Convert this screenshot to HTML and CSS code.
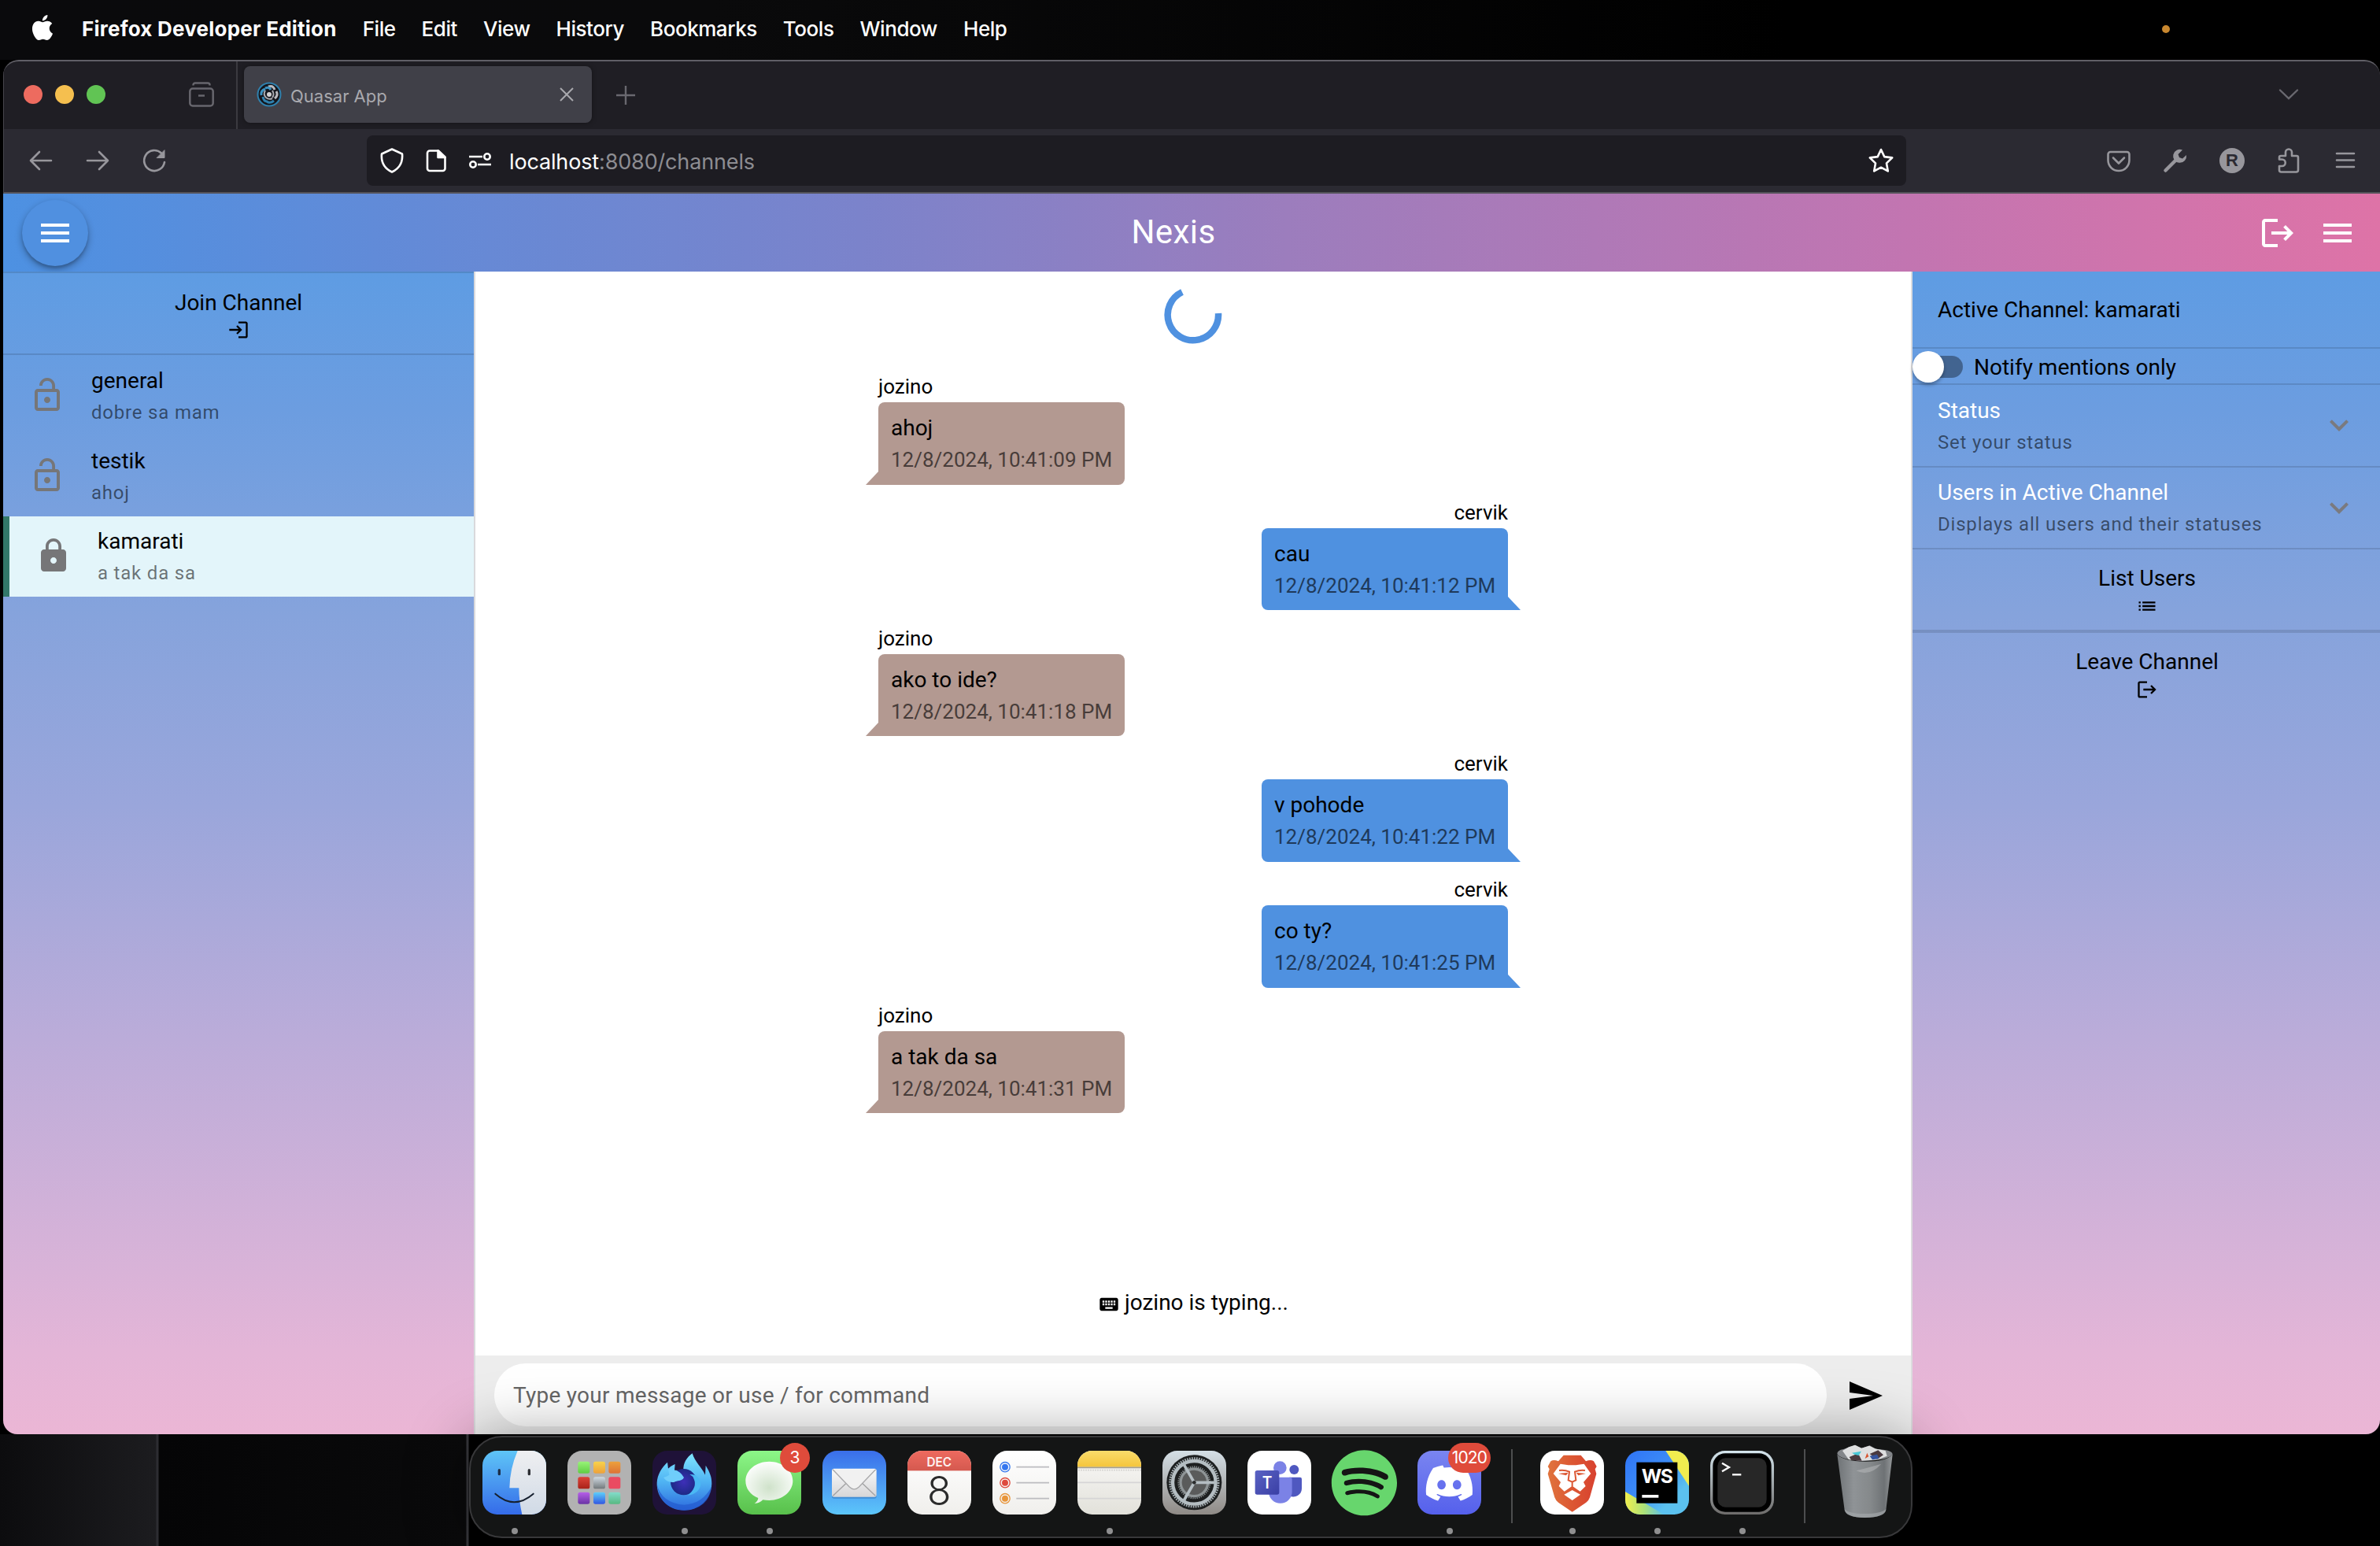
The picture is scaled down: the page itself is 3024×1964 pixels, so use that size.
FILE: index.html
```html
<!DOCTYPE html>
<html lang="en">
<head>
<meta charset="utf-8">
<title>Quasar App</title>
<link rel="stylesheet" href="styles.css">
</head>
<body>
<svg class="defs" width="0" height="0" aria-hidden="true">
  <defs>
    <symbol id="i-menu" viewBox="0 0 24 24"><path d="M3 18h18v-2H3v2zm0-5h18v-2H3v2zm0-7v2h18V6H3z"/></symbol>
    <symbol id="i-logout" viewBox="0 0 24 24"><path d="M17 7l-1.41 1.41L18.17 11H8v2h10.17l-2.58 2.58L17 17l5-5zM4 5h8V3H4c-1.100 0-2 .9-2 2v14c0 1.100.9 2 2 2h8v-2H4V5z"/></symbol>
    <symbol id="i-login" viewBox="0 0 24 24"><path d="M11 7L9.600 8.400l2.600 2.600H2v2h10.200l-2.600 2.600L11 17l5-5-5-5zm9 12h-8v2h8c1.100 0 2-.9 2-2V5c0-1.100-.9-2-2-2h-8v2h8v14z"/></symbol>
    <symbol id="i-lock-open" viewBox="0 0 24 24"><path d="M12 17c1.100 0 2-.9 2-2s-.9-2-2-2-2 .9-2 2 .9 2 2 2zm6-9h-1V6c0-2.760-2.240-5-5-5S7 3.240 7 6h1.900c0-1.710 1.390-3.100 3.100-3.100 1.710 0 3.100 1.390 3.100 3.100v2H6c-1.100 0-2 .9-2 2v10c0 1.100.9 2 2 2h12c1.100 0 2-.9 2-2V10c0-1.100-.9-2-2-2zm0 12H6V10h12v10z"/></symbol>
    <symbol id="i-lock" viewBox="0 0 24 24"><path d="M18 8h-1V6c0-2.760-2.240-5-5-5S7 3.240 7 6v2H6c-1.100 0-2 .9-2 2v10c0 1.100.9 2 2 2h12c1.100 0 2-.9 2-2V10c0-1.100-.9-2-2-2zm-6 9c-1.100 0-2-.9-2-2s.9-2 2-2 2 .9 2 2-.9 2-2 2zm3.100-9H8.900V6c0-1.710 1.390-3.100 3.100-3.100 1.710 0 3.100 1.390 3.100 3.100v2z"/></symbol>
    <symbol id="i-list" viewBox="0 0 24 24"><path d="M3 13h2v-2H3v2zm0 4h2v-2H3v2zm0-8h2V7H3v2zm4 4h14v-2H7v2zm0 4h14v-2H7v2zM7 7v2h14V7H7z"/></symbol>
    <symbol id="i-expand" viewBox="0 0 24 24"><path d="M16.590 8.590L12 13.170 7.410 8.590 6 10l6 6 6-6z"/></symbol>
    <symbol id="i-keyboard" viewBox="0 0 24 24"><path d="M20 5H4c-1.100 0-1.990.9-1.990 2L2 17c0 1.100.9 2 2 2h16c1.100 0 2-.9 2-2V7c0-1.100-.9-2-2-2zm-9 3h2v2h-2V8zm0 3h2v2h-2v-2zM8 8h2v2H8V8zm0 3h2v2H8v-2zm-1 2H5v-2h2v2zm0-3H5V8h2v2zm9 7H8v-2h8v2zm0-4h-2v-2h2v2zm0-3h-2V8h2v2zm3 3h-2v-2h2v2zm0-3h-2V8h2v2z"/></symbol>
    <symbol id="i-send" viewBox="0 0 24 24"><path d="M2.010 21L23 12 2.010 3 2 10l15 2-15 2z"/></symbol>
    <linearGradient id="g-finder" x2="0" y2="1"><stop stop-color="#5ec5f7"/><stop offset="1" stop-color="#356be9"/></linearGradient>
    <linearGradient id="g-face" x2="0" y2="1"><stop stop-color="#efeff1"/><stop offset="1" stop-color="#d0dae6"/></linearGradient>
    <linearGradient id="g-flame" x2="0" y2="1"><stop stop-color="#7fe5ff"/><stop offset=".5" stop-color="#4fb3f3"/><stop offset="1" stop-color="#2c6ade"/></linearGradient>
    <radialGradient id="g-globe"><stop stop-color="#3e2fb8"/><stop offset="1" stop-color="#1d2a86"/></radialGradient>
    <linearGradient id="g-msg" x2="0" y2="1"><stop stop-color="#8cf688"/><stop offset="1" stop-color="#58c04b"/></linearGradient>
    <radialGradient id="g-bubble" cy=".62" r=".6"><stop stop-color="#cfe2ca"/><stop offset="1" stop-color="#fbfdfb"/></radialGradient>
    <linearGradient id="g-mail" x2="0" y2="1"><stop stop-color="#3a6eea"/><stop offset="1" stop-color="#5cc6fa"/></linearGradient>
    <linearGradient id="g-env" x2="0" y2="1"><stop stop-color="#fafafa"/><stop offset="1" stop-color="#d6d6d8"/></linearGradient>
    <linearGradient id="g-paper" x2="0" y2="1"><stop stop-color="#fff"/><stop offset="1" stop-color="#f0efec"/></linearGradient>
    <linearGradient id="g-red" x2="0" y2="1"><stop stop-color="#ee6a5f"/><stop offset="1" stop-color="#d4594f"/></linearGradient>
    <linearGradient id="g-yellow" x2="0" y2="1"><stop stop-color="#fadc6b"/><stop offset="1" stop-color="#f5c53c"/></linearGradient>
    <linearGradient id="g-notes" x2="0" y2="1"><stop stop-color="#faf9f8"/><stop offset="1" stop-color="#e2e1da"/></linearGradient>
    <linearGradient id="g-set" x2="0" y2="1"><stop stop-color="#d5dfe6"/><stop offset="1" stop-color="#8f8a86"/></linearGradient>
    <linearGradient id="g-teams" x2="1" y2="1"><stop stop-color="#5a62c3"/><stop offset="1" stop-color="#3a3fa5"/></linearGradient>
    <linearGradient id="g-discord" x2="0" y2="1"><stop stop-color="#7a85f0"/><stop offset="1" stop-color="#5560ec"/></linearGradient>
    <linearGradient id="g-brave"><stop stop-color="#e0743d"/><stop offset=".5" stop-color="#dc5733"/><stop offset="1" stop-color="#d8412f"/></linearGradient>
    <linearGradient id="g-ws" x2="1" y2="1"><stop stop-color="#2f74f7"/><stop offset=".45" stop-color="#3d8df5"/><stop offset=".75" stop-color="#5bc1ef"/></linearGradient>
    <linearGradient id="g-wsy"><stop stop-color="#f2ef4c"/><stop offset=".5" stop-color="#a9e07b"/><stop offset="1" stop-color="#5bc1ef"/></linearGradient>
    <linearGradient id="g-term" x2="0" y2="1"><stop stop-color="#d3e4ec"/><stop offset="1" stop-color="#6e6c6b"/></linearGradient>
    <linearGradient id="g-trash"><stop stop-color="#6f7376"/><stop offset=".3" stop-color="#8f9396"/><stop offset=".6" stop-color="#85898b"/><stop offset=".85" stop-color="#6e7275"/><stop offset="1" stop-color="#96999b"/></linearGradient>
    <linearGradient id="l-green" x2="0" y2="1"><stop stop-color="#98f378"/><stop offset="1" stop-color="#60ce43"/></linearGradient>
    <linearGradient id="l-yellow" x2="0" y2="1"><stop stop-color="#f8d34c"/><stop offset="1" stop-color="#eea13a"/></linearGradient>
    <linearGradient id="l-orange" x2="0" y2="1"><stop stop-color="#eda13c"/><stop offset="1" stop-color="#dd7335"/></linearGradient>
    <linearGradient id="l-red" x2="0" y2="1"><stop stop-color="#dd4439"/><stop offset="1" stop-color="#a92219"/></linearGradient>
    <linearGradient id="l-gray" x2="0" y2="1"><stop stop-color="#cfd9e1"/><stop offset="1" stop-color="#72787b"/></linearGradient>
    <linearGradient id="l-purple" x2="0" y2="1"><stop stop-color="#b760e8"/><stop offset="1" stop-color="#6a33a5"/></linearGradient>
    <linearGradient id="l-blue" x2="0" y2="1"><stop stop-color="#5fd0fa"/><stop offset="1" stop-color="#3158e2"/></linearGradient>
    <linearGradient id="l-teal" x2="0" y2="1"><stop stop-color="#83dccb"/><stop offset="1" stop-color="#58b982"/></linearGradient>
    <clipPath id="squircle"><rect width="243" height="243" rx="56"/></clipPath>
  </defs>
</svg>

<div class="menubar">
  <svg class="apple" viewBox="0 0 24 24"><path d="M12.152 6.896c-.948 0-2.415-1.078-3.960-1.040-2.040.027-3.910 1.183-4.961 3.014-2.117 3.675-.546 9.103 1.519 12.090 1.013 1.454 2.208 3.090 3.792 3.039 1.520-.065 2.090-.987 3.935-.987 1.831 0 2.350.987 3.960.948 1.637-.026 2.676-1.480 3.676-2.948 1.156-1.688 1.636-3.325 1.662-3.415-.039-.013-3.182-1.221-3.220-4.857-.026-3.040 2.480-4.494 2.597-4.559-1.429-2.090-3.623-2.324-4.390-2.376-2-.156-3.675 1.090-4.610 1.090zM15.530 3.830c.843-1.012 1.400-2.427 1.245-3.830-1.207.052-2.662.805-3.532 1.818-.780.896-1.454 2.338-1.273 3.714 1.338.104 2.715-.688 3.559-1.701"/></svg>
  <span class="app-name">Firefox Developer Edition</span>
  <span>File</span><span>Edit</span><span>View</span><span>History</span><span>Bookmarks</span><span>Tools</span><span>Window</span><span>Help</span>
  <i class="mic-dot"></i>
</div>

<div class="window">
  <div class="tabbar">
    <div class="lights"><i class="red"></i><i class="yellow"></i><i class="green"></i></div>
    <svg class="archive" viewBox="0 0 32 32" fill="none" stroke="#67666d" stroke-width="2.500"><path d="M5.500 4.500V4a2.500 2.500 0 0 1 2.500-2.500h16a2.500 2.500 0 0 1 2.500 2.500v.5"/><rect x="1.300" y="8.500" width="29.400" height="22" rx="3.500"/><path d="M12 17.500h8"/></svg>
    <div class="tab">
      <svg class="favicon" viewBox="0 0 32 32"><circle cx="16" cy="16" r="14.500" fill="#14161c" stroke="#2f80ad" stroke-width="2"/><g fill="none" stroke-width="3"><path d="M15 6q6-2 8 4M25 12q3 5-2 9" stroke="#b9b9bd"/><path d="M22 24q-5 4-9 1M8 19q1 6 6 6" stroke="#2f80ad"/><path d="M6 17q-1-6 5-8M11 8q5-2 7 2" stroke="#3d93c2"/><path d="M11 11q-3 5 1 9M20 11q3 5 0 9M12 20q4 3 8 1" stroke="#a9abb0" stroke-width="2"/></g><circle cx="16" cy="16" r="3" fill="#d0d0d2"/></svg>
      <span class="tab-title">Quasar App</span>
      <svg class="close" viewBox="0 0 18 18" stroke="#a9a9ae" stroke-width="2" fill="none"><path d="M1 1l16 16M17 1L1 17"/></svg>
    </div>
    <svg class="plus" viewBox="0 0 24 24" stroke="#69686f" stroke-width="2.400"><path d="M0 12h24M12 0v24"/></svg>
    <svg class="tabs-menu" viewBox="0 0 26 14" fill="none" stroke="#69686f" stroke-width="2.400" stroke-linecap="round"><path d="M2 1.500l11 10.500 11-10.500"/></svg>
  </div>

  <div class="toolbar">
    <svg class="nav back" viewBox="0 0 32 32" fill="none" stroke="#97969c" stroke-width="2.600" stroke-linecap="round" stroke-linejoin="round"><path d="M29 16H3M14 5L3 16l11 11"/></svg>
    <svg class="nav" viewBox="0 0 32 32" fill="none" stroke="#97969c" stroke-width="2.600" stroke-linecap="round" stroke-linejoin="round"><path d="M3 16h26M18 5l11 11-11 11"/></svg>
    <svg class="nav" viewBox="0 0 32 32" fill="none" stroke="#97969c" stroke-width="2.600" stroke-linecap="round"><path d="M29 18A13 13 0 1 1 25 6.500"/><path d="M29 3v9.500h-9.500z" fill="#97969c" stroke-width="1"/></svg>
    <div class="urlbar">
      <svg viewBox="0 0 32 32" fill="none" stroke="#fff" stroke-width="2.600" stroke-linejoin="round"><path d="M16 1.500l13 6q1.500 16-13 23Q1.500 23.500 3 7.500z"/></svg>
      <svg viewBox="0 0 32 32" fill="none" stroke="#fff" stroke-width="2.600" stroke-linejoin="round"><path d="M8 3.500h11l8.500 8V26a3 3 0 0 1-3 3H8a3 3 0 0 1-3-3V6.500a3 3 0 0 1 3-3z"/><path d="M18.500 3.500v8.500h9z" fill="#fff"/></svg>
      <svg viewBox="0 0 32 32" fill="none" stroke="#fff" stroke-width="2.600"><path d="M2 11h17M13 21h17"/><circle cx="25" cy="11" r="3.700"/><circle cx="7" cy="21" r="3.700"/></svg>
      <span class="url"><b>localhost</b>:8080/channels</span>
      <svg class="star" viewBox="0 0 32 32" fill="none" stroke="#fff" stroke-width="2.600" stroke-linejoin="round"><path d="M16 2l4.300 9.100 9.900 1.300-7.200 7 1.800 10L16 24.700l-8.800 4.700 1.800-10-7.200-7 9.900-1.300z"/></svg>
    </div>
    <div class="tools">
      <svg viewBox="0 0 32 32" fill="none" stroke="#97969c" stroke-width="2.600" stroke-linecap="round" stroke-linejoin="round"><path d="M5.500 5h21a3 3 0 0 1 3 3v7.500a13.500 13.500 0 0 1-27 0V8a3 3 0 0 1 3-3z"/><path d="M9 12.500l7 7 7-7"/></svg>
      <svg viewBox="0 0 32 32"><path d="M3.500 28.500L18 14" stroke="#97969c" stroke-width="4.500" stroke-linecap="round"/><path d="M25 2.500a8.500 8.500 0 1 0 5 6.500l-5 4.500-4-1.500-1.500-4z" fill="#97969c"/></svg>
      <span class="ext">R</span>
      <svg viewBox="0 0 32 32" fill="none" stroke="#97969c" stroke-width="2.600" stroke-linejoin="round"><path d="M4 14.500V12a2 2 0 0 1 2-2h6V5.500a4 4 0 0 1 8 0V10h6a2 2 0 0 1 2 2v16a2.500 2.500 0 0 1-2.500 2.500h-19A2.500 2.500 0 0 1 4 28v-5h3.500a4.200 4.200 0 0 0 0-8.500z"/></svg>
      <svg viewBox="0 0 32 32" stroke="#97969c" stroke-width="2.600" stroke-linecap="round"><path d="M5 7h22M5 15.500h22M5 24h22"/></svg>
    </div>
  </div>

  <div class="app">
    <header class="header">
      <span class="fab"><svg class="i48"><use href="#i-menu"/></svg></span>
      <h1>Nexis</h1>
      <svg class="i48"><use href="#i-logout"/></svg>
      <svg class="i48"><use href="#i-menu"/></svg>
    </header>

    <div class="body">
      <aside class="left">
        <div class="action join"><span>Join Channel</span><svg class="i28"><use href="#i-login"/></svg></div>
        <div class="channel"><svg class="i48"><use href="#i-lock-open"/></svg><div><p>general</p><small>dobre sa mam</small></div></div>
        <div class="channel"><svg class="i48"><use href="#i-lock-open"/></svg><div><p>testik</p><small>ahoj</small></div></div>
        <div class="channel active"><svg class="i48"><use href="#i-lock"/></svg><div><p>kamarati</p><small>a tak da sa</small></div></div>
      </aside>

      <main class="chat">
        <svg class="spinner" viewBox="0 0 76 76" fill="none" stroke="#4f91e0" stroke-width="8.500"><path d="M70 36A32.200 32.200 0 1 1 24 9"/></svg>
        <div class="messages">
          <div class="msg"><span class="name">jozino</span><div class="bubble"><p>ahoj</p><time>12/8/2024, 10:41:09 PM</time></div></div>
          <div class="msg sent"><span class="name">cervik</span><div class="bubble"><p>cau</p><time>12/8/2024, 10:41:12 PM</time></div></div>
          <div class="msg"><span class="name">jozino</span><div class="bubble"><p>ako to ide?</p><time>12/8/2024, 10:41:18 PM</time></div></div>
          <div class="msg sent"><span class="name">cervik</span><div class="bubble"><p>v pohode</p><time>12/8/2024, 10:41:22 PM</time></div></div>
          <div class="msg sent"><span class="name">cervik</span><div class="bubble"><p>co ty?</p><time>12/8/2024, 10:41:25 PM</time></div></div>
          <div class="msg"><span class="name">jozino</span><div class="bubble"><p>a tak da sa</p><time>12/8/2024, 10:41:31 PM</time></div></div>
        </div>
        <div class="typing"><svg class="i28"><use href="#i-keyboard"/></svg><span>jozino is typing...</span></div>
        <footer class="composer">
          <div class="input">Type your message or use / for command</div>
          <svg class="i48"><use href="#i-send"/></svg>
        </footer>
      </main>

      <aside class="right">
        <div class="current">Active Channel: kamarati</div>
        <div class="notify"><span class="toggle"></span><span class="notify-label">Notify mentions only</span></div>
        <div class="expand"><div><p>Status</p><small>Set your status</small></div><svg class="i48"><use href="#i-expand"/></svg></div>
        <div class="expand"><div><p>Users in Active Channel</p><small>Displays all users and their statuses</small></div><svg class="i48"><use href="#i-expand"/></svg></div>
        <div class="action thick"><span>List Users</span><svg class="i28"><use href="#i-list"/></svg></div>
        <div class="action last"><span>Leave Channel</span><svg class="i28"><use href="#i-logout"/></svg></div>
      </aside>
    </div>
  </div>
</div>

<div class="desktop">
<div class="dock">
  <div class="slot running"><svg viewBox="0 0 243 243"><g clip-path="url(#squircle)"><rect width="243" height="243" fill="url(#g-finder)"/><path d="M134 0Q104 70 103 142H139Q139 190 151 243H243V0z" fill="url(#g-face)"/></g><rect x="59" y="69" width="10" height="25" rx="5" fill="#1c2e48"/><rect x="173" y="69" width="10" height="25" rx="5" fill="#2c2e33"/><path d="M49 164Q121 227 194 164" fill="none" stroke="#16202e" stroke-width="6" stroke-linecap="round"/></svg></div>
  <div class="slot"><svg viewBox="0 0 243 243"><rect width="243" height="243" rx="56" fill="#b2b2b2"/><g><rect x="40" y="41" width="45" height="45" rx="8" fill="url(#l-green)"/><rect x="99" y="41" width="45" height="45" rx="8" fill="url(#l-yellow)"/><rect x="157" y="41" width="45" height="45" rx="8" fill="url(#l-orange)"/><rect x="40" y="100" width="45" height="45" rx="8" fill="url(#l-red)"/><rect x="99" y="100" width="45" height="45" rx="8" fill="url(#l-gray)"/><rect x="157" y="100" width="45" height="45" rx="8" fill="#ea4b61"/><rect x="40" y="158" width="45" height="45" rx="8" fill="url(#l-purple)"/><rect x="99" y="158" width="45" height="45" rx="8" fill="url(#l-blue)"/><rect x="157" y="158" width="45" height="45" rx="8" fill="url(#l-teal)"/></g></svg></div>
  <div class="slot running"><svg viewBox="0 0 243 243"><rect width="243" height="243" rx="56" fill="#1f1238"/><path d="M17 122C18 92 36 62 57 44L60 68C68 60 78 54 86 51L84 74L118 76C116 46 132 24 152 10C162 44 186 60 201 92L203 56C219 82 226 100 226 125C224 188 175 227 121 227C60 227 15 180 17 122z" fill="url(#g-flame)"/><circle cx="119" cy="119" r="50" fill="url(#g-globe)"/><path d="M60 68Q74 62 84 74Q106 76 120 102C112 118 94 112 82 120C64 120 52 116 42 102Q56 98 64 92z" fill="#6fcdfb"/><path d="M142 90Q178 88 184 128Q178 164 134 170Q172 140 158 108Q154 96 142 90z" fill="#4bb9f4"/><path d="M17 128Q36 200 121 206Q190 204 226 136Q216 222 121 227Q28 222 17 128z" fill="#2258cc" opacity=".65"/></svg></div>
  <div class="slot running"><svg viewBox="0 0 243 243"><rect width="243" height="243" rx="56" fill="url(#g-msg)"/><path d="M121 41C171 41 211 74 211 115S171 189 121 189Q108 189 97 187Q86 199 65 201Q78 192 79 180C48 168 31 143 31 115C31 74 71 41 121 41z" fill="url(#g-bubble)"/></svg><span class="badge">3</span></div>
  <div class="slot"><svg viewBox="0 0 243 243"><rect width="243" height="243" rx="56" fill="url(#g-mail)"/><rect x="36" y="72" width="170" height="110" rx="8" fill="#1d4f9c" opacity=".35"/><rect x="36" y="68" width="170" height="108" rx="8" fill="url(#g-env)"/><path d="M40 172L92 122M202 172L150 122" stroke="#a2a2a4" stroke-width="4"/><path d="M39 71L103 138Q121 155 139 138L203 71" fill="#f1f1f1" stroke="#a9a9ab" stroke-width="4"/></svg></div>
  <div class="slot"><svg viewBox="0 0 243 243"><g clip-path="url(#squircle)"><rect width="243" height="243" fill="url(#g-paper)"/><rect width="243" height="76" fill="url(#g-red)"/></g><text x="121" y="59" class="cal-month">DEC</text><text x="121" y="206" class="cal-day">8</text></svg></div>
  <div class="slot"><svg viewBox="0 0 243 243"><rect width="243" height="243" rx="56" fill="url(#g-paper)"/><g fill="none" stroke-width="4"><circle cx="48" cy="62" r="18.500" stroke="#3577ef"/><circle cx="48" cy="122" r="18.500" stroke="#de4a3d"/><circle cx="48" cy="182" r="18.500" stroke="#e8953a"/><path d="M91 62h125M91 122h125M91 182h125" stroke="#bcbcc0" stroke-width="5"/></g><circle cx="48" cy="62" r="12" fill="#3577ef"/><circle cx="48" cy="122" r="12" fill="#de4a3d"/><circle cx="48" cy="182" r="12" fill="#e8953a"/></svg></div>
  <div class="slot running"><svg viewBox="0 0 243 243"><g clip-path="url(#squircle)"><rect width="243" height="243" fill="url(#g-notes)"/><rect width="243" height="62" fill="url(#g-yellow)"/><path d="M0 64h243" stroke="#a5a090" stroke-width="5"/><path d="M4 74h238" stroke="#c9c8c5" stroke-width="5" stroke-dasharray="4 5"/><path d="M0 121h243M0 182h243" stroke="#d6d5d6" stroke-width="5"/></g></svg></div>
  <div class="slot"><svg viewBox="0 0 243 243"><rect width="243" height="243" rx="56" fill="url(#g-set)"/><circle cx="121" cy="121" r="105" fill="#1d1f20"/><g fill="none"><circle cx="121" cy="121" r="92" stroke="#a7b0b5" stroke-width="9" stroke-dasharray="5 4"/><circle cx="121" cy="121" r="82" stroke="#b4bdc2" stroke-width="13"/><circle cx="121" cy="121" r="52" fill="#5a5b5b" stroke="#8e9496" stroke-width="10"/><circle cx="121" cy="121" r="60" stroke="#868c8e" stroke-width="6" stroke-dasharray="4 4"/><path d="M121 121h78M121 121L82 53M121 121L82 189" stroke="#b4bdc2" stroke-width="11"/></g><circle cx="121" cy="121" r="7" fill="#2a2c2d"/></svg></div>
  <div class="slot"><svg viewBox="0 0 243 243"><rect width="243" height="243" rx="56" fill="#fff"/><circle cx="178" cy="72" r="18" fill="#4f58c0"/><path d="M160 101h40q7 0 7 7v36a32 32 0 0 1-47 28z" fill="#4f58c0"/><circle cx="124" cy="65" r="25" fill="#7b82e6"/><path d="M81 101h82q7 0 7 7v48a44 44 0 0 1-89 0z" fill="#7b82e6"/><rect x="29" y="75" width="92" height="92" rx="8" fill="url(#g-teams)"/><text x="75" y="145" class="teams-t">T</text></svg></div>
  <div class="slot"><svg viewBox="0 0 243 243"><circle cx="121" cy="122" r="122" fill="#151515"/><path transform="translate(-3.500 -2.500) scale(10.400)" fill="#67d66d" d="M12 0C5.400 0 0 5.400 0 12s5.400 12 12 12 12-5.400 12-12S18.660 0 12 0zm5.521 17.340c-.240.359-.660.480-1.021.240-2.820-1.740-6.360-2.101-10.561-1.141-.418.122-.779-.179-.899-.539-.120-.421.180-.780.540-.900 4.560-1.021 8.520-.600 11.640 1.320.420.180.479.659.301 1.020zm1.440-3.300c-.301.420-.841.600-1.262.300-3.239-1.980-8.159-2.580-11.939-1.380-.479.120-1.020-.120-1.140-.600-.120-.480.120-1.021.600-1.141C9.600 9.900 15 10.561 18.720 12.840c.361.181.540.780.241 1.200zm.120-3.360C15.240 8.400 8.820 8.160 5.160 9.301c-.600.179-1.200-.181-1.380-.721-.180-.601.180-1.200.720-1.381 4.260-1.260 11.280-1.020 15.721 1.621.539.300.719 1.020.419 1.560-.299.421-1.020.599-1.559.300z"/></svg></div>
  <div class="slot running"><svg viewBox="0 0 243 243"><rect width="243" height="243" rx="56" fill="url(#g-discord)"/><path transform="translate(32.500 34) scale(7.400)" fill="#fff" d="M20.317 4.370a19.791 19.791 0 0 0-4.885-1.515.074.074 0 0 0-.079.037c-.211.375-.445.865-.608 1.250-1.845-.276-3.680-.276-5.487 0-.164-.393-.406-.874-.618-1.250a.077.077 0 0 0-.079-.037 19.736 19.736 0 0 0-4.885 1.515.070.070 0 0 0-.032.028C.533 9.046-.319 13.580.099 18.058a.082.082 0 0 0 .031.056c2.053 1.508 4.041 2.423 5.993 3.029a.078.078 0 0 0 .084-.028c.462-.630.873-1.295 1.226-1.994a.076.076 0 0 0-.042-.106c-.653-.248-1.274-.550-1.872-.892a.077.077 0 0 1-.008-.128c.126-.094.252-.192.372-.291a.074.074 0 0 1 .078-.011c3.928 1.793 8.180 1.793 12.061 0a.074.074 0 0 1 .079.010c.120.099.246.198.373.292a.077.077 0 0 1-.007.128 12.299 12.299 0 0 1-1.873.891.077.077 0 0 0-.041.107c.360.698.772 1.363 1.225 1.993a.076.076 0 0 0 .084.029c1.961-.607 3.950-1.522 6.002-3.029a.077.077 0 0 0 .031-.055c.500-5.177-.838-9.674-3.549-13.660a.061.061 0 0 0-.031-.029zM8.020 15.331c-1.183 0-2.157-1.086-2.157-2.419 0-1.333.956-2.419 2.157-2.419 1.211 0 2.176 1.095 2.157 2.419 0 1.333-.956 2.419-2.157 2.419zm7.975 0c-1.183 0-2.157-1.086-2.157-2.419 0-1.333.955-2.419 2.157-2.419 1.211 0 2.176 1.095 2.157 2.419 0 1.333-.946 2.419-2.157 2.419z"/></svg><span class="badge wide">1020</span></div>
  <i class="sep"></i>
  <div class="slot running"><svg viewBox="83 70 243 243"><rect x="83" y="70" width="243" height="243" rx="56" fill="#fff"/><path d="M172 87H238L257 110Q276 102 287 110L298 130L292 140L297 158L272 248Q268 260 258 267L205 303L152 267Q142 260 138 248L112 158L118 140L112 130L123 110Q134 102 152 110z" fill="url(#g-brave)"/><path d="M133 157L160 120L190 125H219L250 120L276 157L248 190L256 205L235 225L205 204L175 225L154 205L161 190z" fill="#fff"/><path d="M155 145Q176 142 194 150L190 182L205 189L219 182L215 150Q234 142 254 145M205 189V206" fill="none" stroke="#dc5733" stroke-width="6"/><path d="M152 157L190 153L182 164zM257 157L220 153L228 164z" fill="#dc5733"/><path d="M205 220L236 237L205 259L174 237z" fill="#fff"/></svg></div>
  <div class="slot running"><svg viewBox="0 0 243 243"><g clip-path="url(#squircle)"><rect width="243" height="243" fill="url(#g-ws)"/><path d="M154 0H243V134z" fill="#f1ec4f"/><path d="M0 156L148 243H0z" fill="url(#g-wsy)"/></g><rect x="43" y="44" width="156" height="156"/><text x="120" y="122" class="ws-t">WS</text><rect x="64" y="168" width="63" height="11" fill="#fff"/></svg></div>
  <div class="slot running"><svg viewBox="0 0 243 243"><rect width="243" height="243" rx="56" fill="url(#g-term)"/><rect x="10" y="10" width="223" height="223" rx="47" fill="#000"/><rect x="28" y="28" width="187" height="187" rx="30" fill="#272727"/><path d="M45 47L72 63 45 79" fill="none" stroke="#fff" stroke-width="7"/><path d="M84 91h34" stroke="#fff" stroke-width="7"/></svg></div>
  <i class="sep"></i>
  <div class="slot"><svg viewBox="0 0 243 243"><path d="M16 12Q16 -2 40 -6L84 -22 110 -10 140 -20 165 -6Q227 -4 227 14Q210 36 121 38Q30 36 16 12z" fill="#83868a"/><path d="M36 0L60 -14 84 -22 108 -10 138 -19 160 -8 200 0 206 20 170 34 110 38 60 34z" fill="#dedfe0"/><path d="M62 24L96 10 110 38 70 36zM140 12L172 -2 192 16 168 32z" fill="#4a3a40"/><path d="M72 8L108 2 98 18 82 14z" fill="#48c7d6"/><path d="M140 20L168 14 176 30 150 34z" fill="#35549f"/><path d="M122 30L130 8 136 22z" fill="#d8542e"/><path d="M16 14Q40 40 121 41T227 14L202 226Q198 254 121 255Q48 254 44 226z" fill="url(#g-trash)"/><path d="M44 222Q60 240 121 240T202 222Q200 254 121 255Q48 254 44 222z" fill="#a3a7aa" opacity=".7"/><path d="M88 76Q140 100 184 50Q150 60 88 76z" fill="#b9bcbe" opacity=".5"/></svg></div>
</div>
</div>
</body>
</html>
```

FILE: styles.css
```css
* { box-sizing: border-box; }
body {
  margin: 0;
  width: 3024px;
  height: 1964px;
  overflow: hidden;
  background: #000;
  font-family: Roboto, "Noto Sans", sans-serif;
  font-size: 28px;
  color: #000;
  display: flex;
  flex-direction: column;
}
.defs { position: absolute; }
svg { display: block; flex: none; overflow: visible; }
p { margin: 0; }
.i48 { width: 48px; height: 48px; fill: currentColor; }
.i28 { width: 28px; height: 28px; fill: currentColor; }

/* system menu bar */
.menubar {
  height: 76px;
  flex: none;
  display: flex;
  align-items: center;
  padding: 0 0 4px 38px;
  background: linear-gradient(90deg, #0a0a0c, #0a0a0b 30%, #000 75%);
  color: #fff;
  font-family: Inter, "Liberation Sans", sans-serif;
  font-size: 26px;
  font-weight: 500;
  letter-spacing: -.45px;
}
.menubar span { margin-right: 33px; white-space: nowrap; }
.menubar .app-name { font-weight: 700; letter-spacing: .22px; }
.apple { width: 32px; height: 32px; fill: #fff; margin: -2px 34px 0 0; }
.mic-dot { width: 10px; height: 10px; border-radius: 50%; background: #c8872f; margin-left: auto; margin-right: 267px; margin-top: 2px; }

/* browser window */
.window {
  height: 1746px;
  flex: none;
  margin-left: 4px;
  display: flex;
  flex-direction: column;
  border-radius: 20px 20px 18px 18px;
  overflow: hidden;
  border-top: 2px solid #605f66;
  background: #1f1e24;
}
.tabbar { height: 86px; flex: none; display: flex; align-items: center; padding: 0 0 2px 25px; border-left: 1px solid #46454c; }
.lights { display: flex; gap: 16px; }
.lights i { width: 24px; height: 24px; border-radius: 50%; }
.red { background: #ed6b5f; }
.yellow { background: #f5bf4f; }
.green { background: #61c454; }
.archive { width: 32px; height: 32px; margin-left: 106px; }
.tab {
  width: 442px;
  height: 72px;
  margin-left: 38px;
  padding: 0 23px 0 16px;
  border-radius: 8px;
  background: #404048;
  display: flex;
  align-items: center;
  box-shadow: 0 0 6px rgba(0, 0, 0, .4);
  position: relative;
}
.tab::before { content: ""; position: absolute; left: -10px; top: -6px; width: 2px; height: 86px; background: #3b3a40; }
.favicon { width: 32px; height: 32px; }
.tab-title { margin: 3px auto 0 11px; font-family: Inter, sans-serif; font-size: 22px; color: #a9a9ae; }
.close { width: 18px; height: 18px; }
.plus { width: 24px; height: 24px; margin: 2px 0 0 31px; }
.tabs-menu { width: 26px; height: 14px; margin: 0 103px 0 auto; }

.toolbar { height: 82px; flex: none; display: flex; align-items: center; padding-left: 31px; background: #2b2a32; border-bottom: 2px solid #55545b; border-left: 1px solid #46454c; }
.nav { width: 32px; height: 32px; margin-right: 40px; }
.urlbar {
  width: 1956px;
  height: 64px;
  margin-left: 214px;
  padding: 0 16px;
  border-radius: 8px;
  background: #1d1c22;
  display: flex;
  align-items: center;
  gap: 24px;
}
.urlbar svg { width: 32px; height: 32px; }
.url { font-family: Inter, sans-serif; font-size: 27px; color: #8d8d92; margin: 2px 0 0 -3px; letter-spacing: -.15px; }
.url b { font-weight: 400; color: #fff; }
.star { margin-left: auto; }
.tools { display: flex; align-items: center; gap: 40px; margin-left: 254px; }
.tools svg { width: 32px; height: 32px; }
.ext { width: 32px; height: 32px; border-radius: 50%; background: #97969c; color: #2b2a32; font: 700 22px/32px "Liberation Sans", sans-serif; text-align: center; }

/* app */
.app { flex: 1; display: flex; flex-direction: column; min-height: 0; }
.header {
  height: 99px;
  flex: none;
  display: flex;
  align-items: center;
  gap: 28px;
  padding: 1px 30px 0 24px;
  color: #fff;
  background: linear-gradient(90deg, #4d91e2, #7b83cb 36%, #9c7dbd 54%, #c275b1 80%, #de73a7);
}
.fab { width: 84px; height: 84px; border-radius: 50%; background: #5090e0; display: grid; place-items: center; box-shadow: 0 4px 10px rgba(0, 0, 0, .32), 0 3px 3px rgba(0, 0, 0, .12); }
.header h1 { flex: 1; margin: -2px 0 0; text-align: center; font-size: 42px; line-height: 80px; font-weight: 400; letter-spacing: .42px; }

.body { flex: 1; display: grid; grid-template-columns: 600px 1826px 1fr; min-height: 0; }
.left, .right { background: linear-gradient(#5e9ce3 0, #6c9de0 12%, #85a3dc 29%, #9aa6db 46%, #bbacd9 66%, #d9b3d8 86%, #e4b5d7 93%, #ebb6d5); }
.left { border-right: 2px solid #d9d9dc; }
.right { border-left: 2px solid #dcdcde; margin-left: -2px; }
.action { height: 104px; padding-top: 17px; display: flex; flex-direction: column; align-items: center; gap: 1px; line-height: 40px; border-bottom: 2px solid rgba(0, 0, 0, .12); }
.right .action { padding-left: 2px; }
.join { height: 106px; padding-top: 18px; gap: 0; border-top: 2px solid rgba(0, 0, 0, .12); }
.thick { height: 106px; border-bottom-width: 4px; }
.last { border-bottom: 0; }
.channel { height: 102.330px; display: flex; align-items: center; padding-left: 32px; gap: 32px; }
.channel > div, .expand > div { padding-top: 3px; }
.channel .i48 { color: #767678; margin-top: -1px; }
.channel p, .expand p { line-height: 40px; }
.channel small, .expand small { display: block; line-height: 40px; font-size: 24px; letter-spacing: .8px; color: rgba(0, 0, 0, .54); }
.channel.active { background: #e3f5fa; border-left: 8px solid #327869; }

.chat { background: #fff; display: flex; flex-direction: column; align-items: center; min-width: 0; }
.spinner { width: 76px; height: 76px; margin: 17px 2px 0 0; }
.messages { width: 800px; margin: 34px 2px 0 0; display: flex; flex-direction: column; }
.msg { height: 159.800px; display: flex; flex-direction: column; align-items: flex-start; }
.sent { align-items: flex-end; }
.name { font-size: 26px; line-height: 39px; }
.bubble { position: relative; width: 313px; height: 104.500px; padding: 13px 16px 11px; border-radius: 8px 8px 8px 0; background: #b39991; line-height: 40px; white-space: nowrap; }
.bubble::after { content: ""; position: absolute; right: 100%; bottom: 0; border: 0 solid transparent; border-right: 16px solid #b39991; border-top: 17px solid transparent; }
.bubble time { display: block; font-size: 26px; opacity: .6; line-height: 40px; }
.sent .bubble { background: #4f91e0; border-radius: 8px 8px 0 8px; }
.sent .bubble::after { right: auto; left: 100%; border-right: 0; border-left: 16px solid #4f91e0; }
.typing { display: flex; align-items: center; gap: 6px; margin: auto 2px 47px 0; line-height: 40px; }
.typing .i28 { margin-top: 4px; }
.composer { width: 100%; height: 100px; flex: none; background: #ededed; display: flex; align-items: flex-start; padding: 10px 0 0 24px; }
.input { width: 1693px; height: 80px; border-radius: 40px; padding: 0 24px; background: #fff; color: #666; line-height: 81px; letter-spacing: .26px; }
.composer .i48 { margin: 17px 0 0 25px; }

.current { height: 98px; line-height: 98px; padding-left: 32px; border-bottom: 2px solid rgba(0, 0, 0, .12); }
.notify { height: 46px; display: flex; align-items: center; gap: 14px; border-bottom: 2px solid rgba(0, 0, 0, .12); }
.toggle { position: relative; width: 64px; height: 28px; margin-top: 1px; border-radius: 14px; background: linear-gradient(90deg, transparent 20px, #426490 20px); }
.toggle::after { content: ""; position: absolute; left: 0; top: -6px; width: 40px; height: 40px; border-radius: 50%; background: #fff; box-shadow: 0 3px 4px rgba(0, 0, 0, .3); }
.notify-label { padding-top: 2px; }
.expand { height: 104.500px; display: flex; justify-content: space-between; align-items: center; padding: 0 28px 0 32px; border-bottom: 2px solid rgba(0, 0, 0, .12); }
.expand p { color: #fff; }
.expand .i48 { color: #7a7a7f; }

/* dock */
.desktop { flex: 1; display: flex; align-items: flex-start; padding: 2px 0 0 596px; background: linear-gradient(90deg, #0c0c0e 0, #1c1c1f 198px, #2d2d32 199px 201px, #050506 202px, #0a0a0b 592px, #38383d 593px 595px, #000 596px); }
.dock {
  width: 1834px;
  height: 130px;
  position: relative;
  display: flex;
  align-items: flex-start;
  gap: 27px;
  padding: 17px 0 0 15px;
  border: 2px solid #38383a;
  border-radius: 42px;
  background: #141515;
  box-shadow: 0 4px 76px 6px rgba(0, 0, 0, .36);
}
.slot { position: relative; width: 81px; height: 81px; flex: none; }
.slot svg { width: 81px; height: 81px; }
.running::after { content: ""; position: absolute; left: 36.500px; top: 98px; width: 8px; height: 8px; border-radius: 4px; background: #8f8f90; }
.sep { width: 2px; height: 94px; flex: none; margin: -2px 8.500px 0 10.500px; background: #4d4e4f; }
.badge { position: absolute; left: 54px; top: -10px; height: 38px; min-width: 38px; border-radius: 19px; background: #df4b3b; color: #fff; text-align: center; font: 400 21px/38px Inter, sans-serif; }
.badge.wide { left: 39px; width: 54px; letter-spacing: -.8px; }
.cal-month { font: 600 46px Inter, sans-serif; fill: #fdf3f2; text-anchor: middle; }
.cal-day { font: 300 150px Inter, sans-serif; fill: #2b2b2b; text-anchor: middle; }
.teams-t { font: 600 62px "Open Sans", sans-serif; fill: #fff; text-anchor: middle; }
.ws-t { font: 700 74px Inter, sans-serif; fill: #fff; text-anchor: middle; letter-spacing: -5px; }
```
